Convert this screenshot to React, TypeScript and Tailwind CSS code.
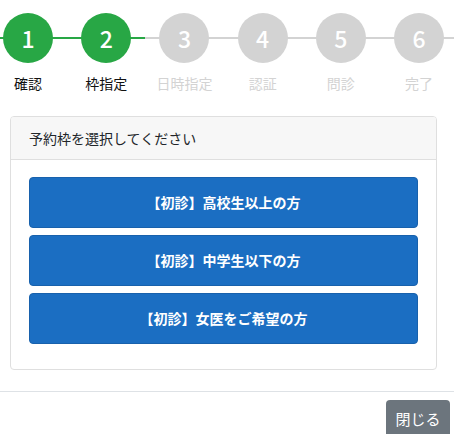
import React from "react";

const steps = [
  { n: "1", label: "確認", done: true },
  { n: "2", label: "枠指定", done: true },
  { n: "3", label: "日時指定", done: false },
  { n: "4", label: "認証", done: false },
  { n: "5", label: "問診", done: false },
  { n: "6", label: "完了", done: false },
];

const options = ["【初診】高校生以上の方", "【初診】中学生以下の方", "【初診】女医をご希望の方"];

export default function App() {
  return (
    <div
      className="w-[454px] h-[434px] overflow-hidden bg-white text-[#212529]"
      style={{ fontFamily: '"Noto Sans CJK JP", "Noto Sans", sans-serif' }}
    >
      <div className="relative pt-[13px]">
        <div className="absolute left-0 right-0 top-[37px] h-[2px] bg-[#d3d3d3]" />
        <div className="absolute left-0 w-[145px] top-[37px] h-[2px] bg-[#28a745]" />
        <div className="relative flex ml-[-11px]">
          {steps.map((s) => (
            <div key={s.n} className="w-[78.2px] shrink-0 flex flex-col items-center">
              <div
                className={`w-[50px] h-[50px] rounded-full flex items-center justify-center text-white text-[23px] font-medium ${
                  s.done ? "bg-[#28a745]" : "bg-[#d3d3d3]"
                }`}
              >
                {s.n}
              </div>
              <div
                className={`mt-[10px] text-[14px] leading-[20px] whitespace-nowrap ${
                  s.done ? "text-[#111]" : "text-[#d3d3d3]"
                }`}
              >
                {s.label}
              </div>
            </div>
          ))}
        </div>
      </div>

      <div className="ml-[10px] w-[427px] mt-[23px] border border-[#dfdfdf] rounded-[4px] overflow-hidden">
        <div className="h-[43px] bg-[#f7f7f7] border-b border-[#dfdfdf] px-[18px] flex items-center text-[14px] text-[#212529]">
          予約枠を選択してください
        </div>
        <div className="pt-[17px] px-[18px] pb-[25px] flex flex-col gap-[7px]">
          {options.map((o) => (
            <button
              key={o}
              className="h-[51px] w-full rounded-[4px] bg-[#1b6ec2] border border-[#1861ac] text-white text-[14px] font-bold flex items-center justify-center"
            >
              {o}
            </button>
          ))}
        </div>
      </div>

      <div className="mt-[21px] border-t border-[#dee2e6] flex justify-end pr-[4px] pt-[8px]">
        <button className="h-[38px] w-[64px] rounded-[4px] bg-[#6c757d] text-white text-[15px] flex items-center justify-center">
          閉じる
        </button>
      </div>
    </div>
  );
}
